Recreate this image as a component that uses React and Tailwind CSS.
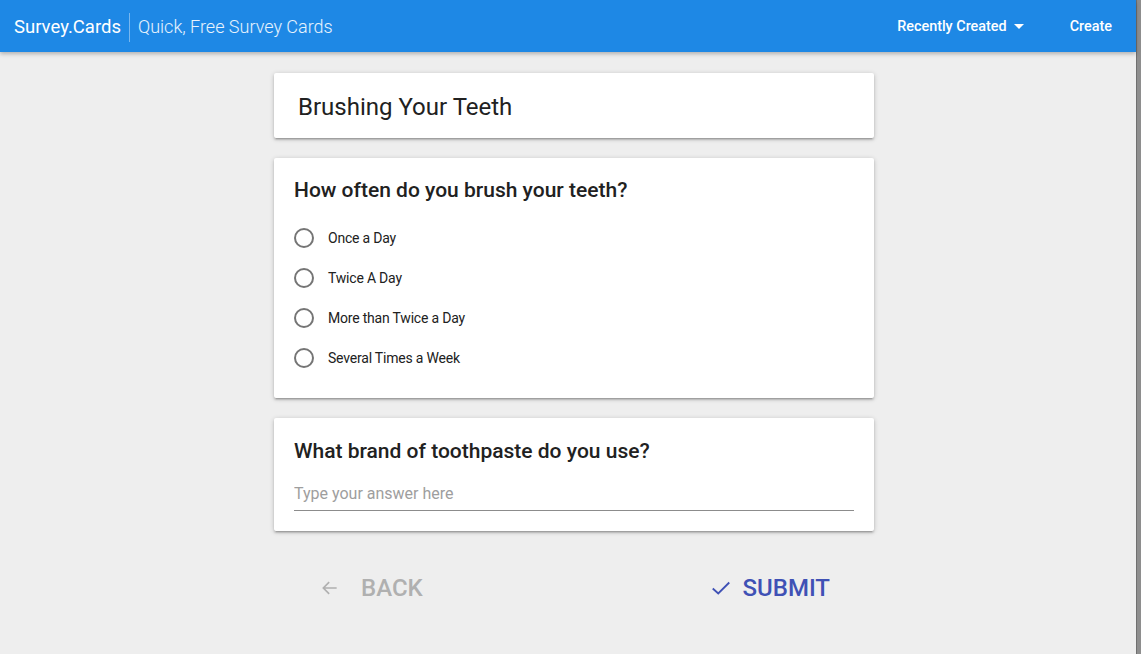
import { useState } from 'react';

const options = ['Once a Day', 'Twice A Day', 'More than Twice a Day', 'Several Times a Week'];

const Card = ({ className = '', children }) => (
  <div
    className={`bg-white rounded-[2px] shadow-[0_2px_2px_rgba(0,0,0,0.14),0_3px_1px_-2px_rgba(0,0,0,0.12),0_1px_5px_rgba(0,0,0,0.2)] ${className}`}
  >
    {children}
  </div>
);

const App = () => {
  const [choice, setChoice] = useState(null);
  const [answer, setAnswer] = useState('');

  return (
    <div className="flex h-[654px] bg-[#eeeeee] font-['Roboto',sans-serif] text-[#212121]">
      <div className="flex-1 flex flex-col">
        {/* Header */}
        <header className="h-[52px] bg-[#1e88e5] text-white flex items-center pt-[2px] shadow-[0_2px_4px_rgba(0,0,0,0.25)] relative z-10">
          <div className="flex items-center pl-[14px]">
            <span className="text-[18.5px] leading-none">Survey.Cards</span>
            <span className="ml-[8px] mr-[8px] w-px h-[29px] bg-white/40"></span>
            <span className="text-[18px] leading-none font-light text-white/90">Quick, Free Survey Cards</span>
          </div>
          <div className="ml-auto flex items-center text-[14.4px] font-medium">
            <button className="flex items-center">
              Recently Created
              <svg className="ml-[7px] w-[10px] h-[5px]" viewBox="0 0 10 5">
                <path d="M0 0h10L5 5z" fill="white" />
              </svg>
            </button>
            <button className="ml-[46px] mr-[24px]">Create</button>
          </div>
        </header>

        {/* Survey */}
        <div className="flex justify-center pl-[12px] pt-[21px]">
          <div className="w-[600px] flex flex-col gap-[20px]">
            <Card className="h-[65px] flex items-center px-[24px] pt-[2px]">
              <h1 className="text-[24px] leading-none">Brushing Your Teeth</h1>
            </Card>

            <Card className="px-[20px] pt-[20px] pb-[20px]">
              <h2 className="text-[21px] font-medium leading-[24px]">How often do you brush your teeth?</h2>
              <div className="mt-[16px] flex flex-col">
                {options.map((opt, i) => (
                  <label
                    key={opt}
                    className="h-[40px] flex items-center cursor-pointer"
                    onClick={() => setChoice(i)}
                  >
                    <span className="w-[20px] h-[20px] rounded-full border-2 border-[#757575] flex items-center justify-center">
                      {choice === i && <span className="w-[10px] h-[10px] rounded-full bg-[#3f51b5]"></span>}
                    </span>
                    <span className="ml-[14px] text-[14px] tracking-[-0.2px]">{opt}</span>
                  </label>
                ))}
              </div>
            </Card>

            <Card className="px-[20px] pt-[21px] pb-[20px]">
              <h2 className="text-[21px] font-medium leading-[24px]">What brand of toothpaste do you use?</h2>
              <input
                value={answer}
                onChange={(e) => setAnswer(e.target.value)}
                placeholder="Type your answer here"
                className="mt-[18px] w-full h-[30px] pb-[4px] text-[16px] border-b border-[#8c8c8c] outline-none placeholder:text-[#9e9e9e]"
              />
            </Card>

            <div className="flex items-center justify-between pl-[46px] pr-[44px] pt-[19px]">
              <button className="flex items-center text-[#b0b0b0] text-[24px] font-medium">
                <svg className="w-[20px] h-[20px]" viewBox="0 0 24 24" fill="none" stroke="currentColor" strokeWidth="2">
                  <path d="M20 12H5M11 5l-7 7 7 7" />
                </svg>
                <span className="ml-[21px]">BACK</span>
              </button>
              <button className="flex items-center text-[#3f51b5] text-[24px] font-medium">
                <svg className="w-[22px] h-[22px]" viewBox="0 0 24 24" fill="none" stroke="currentColor" strokeWidth="2">
                  <path d="M3 12.5l6 5.5L21 6" />
                </svg>
                <span className="ml-[11px]">SUBMIT</span>
              </button>
            </div>
          </div>
        </div>
      </div>
      <div className="w-[5px] bg-[#8e8e8e] border-l border-[#6f6f6f]"></div>
    </div>
  );
};

export default App;
